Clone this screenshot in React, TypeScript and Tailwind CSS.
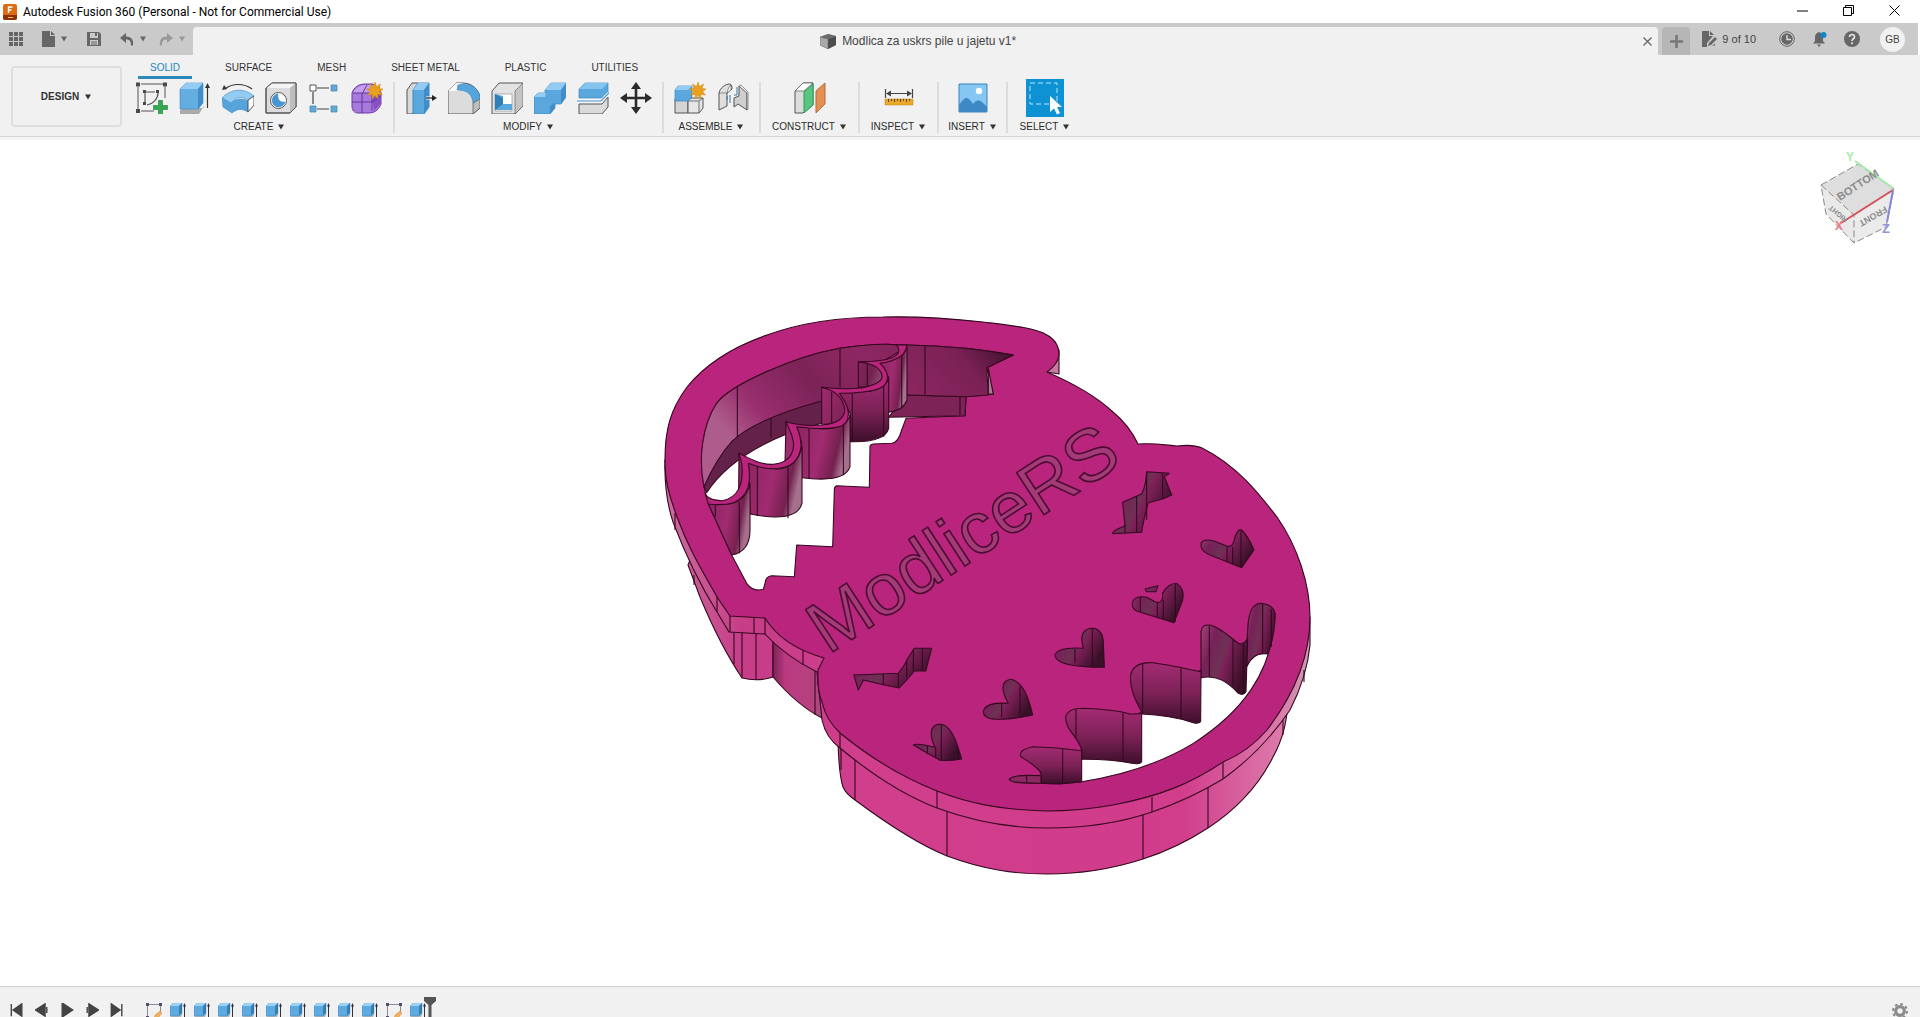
import type { ReactNode } from "react";

const INK = "#35081f";
const OUT = "#555555";

function Caret({ className = "text-[#333]" }: { className?: string }) {
  return (
    <svg viewBox="0 0 8 6" className={`h-1.5 w-2 shrink-0 ${className}`} aria-hidden="true">
      <path d="M1 0.5h6L4 5.5z" fill="currentColor" />
    </svg>
  );
}

function Glyph({ children, box = "0 0 32 32", className = "size-8" }: { children: ReactNode; box?: string; className?: string }) {
  return (
    <svg viewBox={box} className={`block shrink-0 ${className}`} fill="none" aria-hidden="true">
      {children}
    </svg>
  );
}

const Star = () => (
  <path
    d="M24 0l1.500 4.600 4-2.600-1.500 4.500 4.500.500-4 2.500 3 3.500-4.700-.600.200 4.600-3-3.500-3 3.500.200-4.600-4.700.600 3-3.500-4-2.500 4.500-.500-1.500-4.500 4 2.600z"
    fill="#eaa01c"
    stroke="#c98715"
    strokeWidth="0.500"
  />
);

const SketchIcon = () => (
  <Glyph>
    <path d="M5 2H27M2 5V27M5 29H18M29 5V16" stroke="#555" />
    <path d="M0 0.500h4v4H0zM27 .5h4v4h-4zM0 27h4v4H0z" fill="#4a4a4a" />
    <path d="M9 10h10M9 10v11M22 11c0 6-5 11-11 12" stroke="#555" strokeWidth="1.200" />
    <path d="M7 8h3v3H7zM20 8h3v3h-3zM7 20h3v3H7z" fill="#4a4a4a" />
    <path d="M22.500 18.500h4v5h5v4h-5v5h-4v-5h-5v-4h5z" fill="#35a853" stroke="#218a3d" strokeWidth="0.700" />
  </Glyph>
);
const ExtrudeIcon = () => (
  <Glyph>
    <path d="M1 28l4-2h20v-2l-5 8H1z" fill="#aaa" />
    <path d="M1 7l6-6h17v20l-5 6H1z" fill="#64ade0" stroke="#3d8ac2" strokeWidth="0.600" />
    <path d="M1 7l6-6h17l-5 6z" fill="#93cbf2" />
    <path d="M19 7l5-6v20l-5 6z" fill="#3f8dc9" />
    <path d="M28.500 4v22" stroke="#333" strokeWidth="1.200" />
    <path d="M28.500 1l2.500 5h-5z" fill="#333" />
  </Glyph>
);
const RevolveIcon = () => (
  <Glyph>
    <path d="M3 7C10 1 22 1 30 7" stroke="#333" strokeWidth="1.200" />
    <path d="M0 8l2-5 3 4z" fill="#333" />
    <path d="M0 16C9 6 23 6 32 14l-6 4c-6-4-12-4-17 4z" fill="#93cbf2" stroke="#3d8ac2" strokeWidth="0.600" />
    <path d="M0 16l9 5c5-5 12-5 17-2v11c-7-4-11-3-16 1L1 25z" fill="#56a4dc" stroke="#3d8ac2" strokeWidth="0.600" />
    <path d="M26 18l6-4v9l-6 7z" fill="#fff" stroke={OUT} />
  </Glyph>
);
const HoleIcon = () => (
  <Glyph>
    <path d="M1 6l6-5h24v24l-6 6H1z" fill="#dcdcdc" stroke={OUT} />
    <path d="M1 6l6-5h24l-6 5z" fill="#f4f4f4" />
    <path d="M25 6l6-5v24l-6 6z" fill="#bdbdbd" />
    <path d="M1 6l6-5h24v24l-6 6H1z" stroke={OUT} />
    <circle cx="13.500" cy="18.500" r="8" fill="#fff" stroke={OUT} />
    <path d="M13 12a6.500 6.500 0 1 0 7 8c-5 1-8-3-7-8z" fill="#4697d1" stroke="#2c76ad" strokeWidth="0.500" />
  </Glyph>
);
const PatternIcon = () => (
  <Glyph>
    <path d="M9 6h12M5 10v12M9 27h12" stroke="#444" strokeWidth="1.200" />
    <path d="M2 3h6v6H2z" fill="#fff" stroke={OUT} />
    <path d="M23 3h6v6h-6zM23 24h6v6h-6zM2 24h6v6H2z" fill="#64a9d6" stroke="#3f81ac" strokeWidth="0.700" />
  </Glyph>
);
const FormIcon = () => (
  <Glyph>
    <path d="M1 11C3 5 8 2 14 2h8l8 8v12c-3 7-7 9-13 9H7c-4 0-6-3-6-7z" fill="#a879dc" stroke="#6d3aa8" />
    <path d="M2 11c3-6 8-8 13-8h9l-5 8z" fill="#c5a0ee" />
    <path d="M21 12l9-4v13l-7 8z" fill="#8650c4" />
    <path d="M1 20h20l9-6M11 31V12l5-9M21 12v17M2 11h18l9-6" stroke="#5c2f91" strokeWidth="0.900" />
    <Star />
  </Glyph>
);
const PressPullIcon = () => (
  <Glyph>
    <path d="M2 8l5-7h6v24l-6 7H2z" fill="#d8d8d8" stroke={OUT} />
    <path d="M8 8l5-7h11v24l-5 7H8z" fill="#5aa7dd" stroke="#3d8ac2" />
    <path d="M8 8l5-7h11l-5 7z" fill="#93cbf2" />
    <path d="M19 8l5-7v24l-5 7z" fill="#3f8dc9" />
    <path d="M21 16h7" stroke="#fff" strokeWidth="3" />
    <path d="M21 16h8" stroke="#222" strokeWidth="1.300" />
    <path d="M32 16l-5-3v6z" fill="#222" />
  </Glyph>
);
const FilletIcon = () => (
  <Glyph>
    <path d="M0 9l8-8h7c10 0 17 8 17 16v9l-7 6H0z" fill="#dcdcdc" stroke={OUT} />
    <path d="M0 9l8-8h7l-4 8z" fill="#fafafa" />
    <path d="M10 3c3-2 20-3 22 13l-7 5C24 11 18 8 9 8z" fill="#56a4dc" stroke="#3d8ac2" strokeWidth="0.600" />
    <path d="M25 21l7-4v9l-7 6z" fill="#bdbdbd" stroke={OUT} strokeWidth="0.700" />
  </Glyph>
);
const ShellIcon = () => (
  <Glyph>
    <path d="M1 9l7-8h24v23l-8 8H1z" fill="#e2e2e2" stroke={OUT} />
    <path d="M24 9l8-8v23l-8 8z" fill="#c4c4c4" stroke={OUT} strokeWidth="0.600" />
    <path d="M4 12h17v17H4z" fill="#fff" stroke="#888" strokeWidth="0.600" />
    <path d="M4 12l8 2v8h9v6H4z" fill="#5aa7dd" />
    <path d="M4 12l8 4v6l-8 6z" fill="#2d7fba" />
  </Glyph>
);
const CombineIcon = () => (
  <Glyph>
    <path d="M0 15l4-4h7V8l6-7h15v14l-5 7h-6v4l-5 6H0z" fill="#5aa7dd" stroke="#3d8ac2" strokeWidth="0.700" />
    <path d="M11 8l6-7h15l-5 7zM0 15l4-4h8l-1 4z" fill="#93cbf2" />
    <path d="M27 8l5-7v14l-5 7z" fill="#3f8dc9" />
    <path d="M16 24l5-3v5l-5 6z" fill="#3f8dc9" />
  </Glyph>
);
const SplitIcon = () => (
  <Glyph>
    <path d="M2 7l6-6h23v10l-6 5H2z" fill="#5aa7dd" stroke="#3d8ac2" strokeWidth="0.700" />
    <path d="M2 7l6-6h23l-6 6z" fill="#86c4f0" />
    <path d="M2 22h23l6-7v10l-6 7H2z" fill="#dadada" stroke={OUT} />
    <path d="M0 19h24l8-8" stroke="#fff" strokeWidth="3" />
    <path d="M0 19h24l8-8" stroke="#3d8ac2" strokeWidth="1.200" />
  </Glyph>
);
const MoveIcon = () => (
  <Glyph>
    <path d="M16 5v22M5 16h22" stroke="#2b2b2b" strokeWidth="2.600" />
    <path d="M16 0l5 7H11zM16 32l5-7H11zM0 16l7-5v10zM32 16l-7-5v10z" fill="#2b2b2b" />
  </Glyph>
);
const ComponentIcon = () => (
  <Glyph>
    <path d="M1 17h13v14H1z" fill="#d4d4d4" stroke={OUT} />
    <path d="M14 18l4-2h11v10l-4 5H14z" fill="#e6e6e6" stroke={OUT} />
    <path d="M14 19h11v12M25 19l4-3" stroke={OUT} strokeWidth="0.800" />
    <path d="M1 8l3-4h14v11l-4 4H1z" fill="#5aa7dd" stroke="#3d8ac2" strokeWidth="0.700" />
    <path d="M1 8l3-4h14l-4 4z" fill="#93cbf2" />
    <Star />
  </Glyph>
);
const JointIcon = () => (
  <Glyph>
    <path d="M2 28V11C3 6 8 2 13 2c2 1 2 3 2 5l-5 4v13z" fill="#dedede" stroke={OUT} />
    <path d="M10 11c1-4 2-7 4-8v5zM2 11l8 0" fill="#f7f7f7" stroke={OUT} strokeWidth="0.600" />
    <path d="M17 16l5-2V4l8 7v17l-9-6-4 3z" fill="#cfcfcf" stroke={OUT} />
    <path d="M22 4l2-1 7 7v17l-1 1V11z" fill="#f3f3f3" stroke={OUT} strokeWidth="0.600" />
    <path d="M10 14v4M13 13v8M17 13h3V5" stroke="#3c7ba6" />
  </Glyph>
);
const ConstructIcon = () => (
  <Glyph>
    <path d="M1 9l8-8h10v22L9 31H1z" fill="#dcdcdc" stroke={OUT} />
    <path d="M1 9l8-8h10l-9 8z" fill="#fff" stroke={OUT} strokeWidth="0.700" />
    <path d="M10 10l9-8v21l-9 8z" fill="#58c580" stroke="#2d9c55" />
    <path d="M22 9l9-8v21l-9 9z" fill="#e39055" stroke="#b5683a" />
  </Glyph>
);
const InspectIcon = () => (
  <Glyph>
    <path d="M2.500 7v9M29.500 7v9M5 11.500h22" stroke="#444" strokeWidth="1.200" />
    <path d="M3 11.500l5-3v6zM29 11.500l-5-3v6z" fill="#444" />
    <path d="M2 17h28v6H2z" fill="#eba926" stroke="#bd8218" strokeWidth="0.500" />
    <path d="M5.500 17v3M8.500 17v2M11.500 17v3M14.500 17v2M17.500 17v3M20.500 17v2M23.500 17v3M26.500 17v2" stroke="#5b420f" />
  </Glyph>
);
const InsertIcon = () => (
  <Glyph>
    <path d="M2 2h28v28H2z" fill="#86c6f3" stroke="#3a83b8" />
    <path d="M2 23c6-8 8-10 14-1 4-5 7-5 14 3v5H2z" fill="#3e89c4" />
    <circle cx="22" cy="9" r="3.200" fill="#fff" />
  </Glyph>
);
const SelectIcon = () => (
  <Glyph box="0 0 38 38" className="size-[38px]">
    <path d="M0 0h38v38H0z" fill="#0e92d4" />
    <path d="M4 4h27v21H4z" stroke="#bfe6fa" strokeDasharray="5 3" />
    <path d="M24 17v16l4-3.500 3 6 3-1.500-3-6h5z" fill="#fff" />
  </Glyph>
);

const TABS = ["SURFACE", "MESH", "SHEET METAL", "PLASTIC", "UTILITIES"];

function Group({ label, names, icons, className }: { label: string; names: string[]; icons: ReactNode[]; className: string }) {
  return (
    <div className={`flex h-[51px] flex-col items-center justify-between ${className}`}>
      <div className="flex h-8 items-center gap-[11px]">
        {icons.map((icon, i) => (
          <button key={names[i]} type="button" aria-label={names[i]}>
            {icon}
          </button>
        ))}
      </div>
      <button type="button" className="flex items-center gap-1 text-[10px] leading-3 whitespace-nowrap text-[#2b2b2b]">
        {label}
        <Caret />
      </button>
    </div>
  );
}

function ViewCube() {
  return (
    <svg viewBox="1810 145 100 105" className="absolute top-[5px] right-2.5 h-[105px] w-[100px]" fill="none" role="img" aria-label="View cube">
      <path d="M1821 185l37-21 36 25-40 26z" fill="#dedede" />
      <path d="M1821 185l33 30v28l-28-29z" fill="#e9e9e9" />
      <path d="M1854 215l40-26-8 38-32 16z" fill="#ebebeb" />
      <path d="M1821 185l37-21 36 25-8 38-32 16-28-29zM1821 185l33 30v28" stroke="#8a8a8a" strokeDasharray="7 3" />
      <path d="M1855 161l38 27" stroke="#a6eca9" strokeWidth="2" />
      <path d="M1893 190l-52 33" stroke="#d4525a" strokeWidth="2" />
      <path d="M1893 190l-6 32" stroke="#8787d8" strokeWidth="2" />
      <g fontFamily="Liberation Sans, sans-serif" fontWeight="bold" fill="#8b8b8b">
        <text x="1840" y="201" fontSize="11" transform="rotate(-33 1840 201)">BOTTOM</text>
        <text x="1885" y="206" fontSize="9" transform="rotate(150 1885 206)">FRONT</text>
        <text x="1848" y="219" fontSize="7" transform="rotate(220 1848 219)">RIGHT</text>
        <text x="1846" y="161" fontSize="12" fill="#a6eca9">Y</text>
        <text x="1835" y="230" fontSize="12" fill="#ee7c82">X</text>
        <text x="1882" y="233" fontSize="13" fill="#9494dd">Z</text>
      </g>
    </svg>
  );
}

function Model() {
  return (
    <svg viewBox="0 140 1920 846" className="absolute inset-0 size-full" fill="none" role="img" aria-label="Cookie cutter model">
      <defs>
        <linearGradient id="wallX" x1="0" x2="1" y1="0" y2="0.300">
          <stop offset="0" stopColor="#8a2460" />
          <stop offset="0.550" stopColor="#a12b71" />
          <stop offset="0.850" stopColor="#74214f" />
          <stop offset="1" stopColor="#a5708d" />
        </linearGradient>
        <linearGradient id="wallY" x1="0" x2="0" y1="0" y2="1">
          <stop offset="0" stopColor="#a32b73" />
          <stop offset="0.500" stopColor="#7e2258" />
          <stop offset="1" stopColor="#3d0f2b" />
        </linearGradient>
        <linearGradient id="back" x1="0" x2="1" y1="0.400" y2="0">
          <stop offset="0" stopColor="#ad5c8b" />
          <stop offset="0.140" stopColor="#982e6e" />
          <stop offset="0.350" stopColor="#7c2358" />
          <stop offset="0.550" stopColor="#8e2763" />
          <stop offset="0.820" stopColor="#7b2156" />
          <stop offset="1" stopColor="#3b1029" />
        </linearGradient>
        <linearGradient id="rim" gradientUnits="userSpaceOnUse" x1="665" x2="1310" y1="0" y2="0">
          <stop offset="0" stopColor="#ca6d9c" />
          <stop offset="0.120" stopColor="#c63d88" />
          <stop offset="0.300" stopColor="#d03e8c" />
          <stop offset="0.800" stopColor="#d13c8b" />
          <stop offset="0.950" stopColor="#dc78aa" />
          <stop offset="1" stopColor="#c99caf" />
        </linearGradient>
        <linearGradient id="hole" x1="0" x2="1" y1="0" y2="0.500">
          <stop offset="0" stopColor="#a04377" />
          <stop offset="0.300" stopColor="#78205a" />
          <stop offset="0.550" stopColor="#6d3253" />
          <stop offset="0.620" stopColor="#7e2159" />
          <stop offset="1" stopColor="#3a1029" />
        </linearGradient>
        <linearGradient id="neck" x1="0" x2="1" y1="0" y2="0">
          <stop offset="0" stopColor="#7d2358" />
          <stop offset="0.250" stopColor="#bb3a80" />
          <stop offset="0.900" stopColor="#b44381" />
          <stop offset="1" stopColor="#8e6077" />
        </linearGradient>
      </defs>

      <g stroke={INK} strokeWidth="1.100" strokeLinejoin="round">
        <path d="M688 565L700 597Q720 645 742 678Q758 682 773 677V635L729 615L690 560Z" fill="url(#rim)" />
        <path d="M773 640V677Q798 706 822 718V665Z" fill="url(#neck)" />
        <path d="M694 575v10M734 633V664M742 633V678M756 633V680M815 671V715M818 660Q816 680 822 707V718" />
        <path d="M838 742Q839 775 843 787Q846 794 855 800C890 826 920 845 947 856C985 870 1015 874 1047 874C1085 874 1115 868 1143 859C1168 851 1188 841 1208 828C1240 807 1260 783 1273 757Q1287 732 1288 700Z" fill="url(#rim)" />
        <path d="M855 755V800M947 800V856M1143 800V859M1208 780V828M1283 715V735M841 748V770" />
        <path d="M665 460Q664 495 673 522Q692 572 717 612L729 632L765 634Q785 656 817 672L822 720Q826 738 840 748C870 773 903 795 937 808C975 822 1012 828 1047 828C1085 828 1120 823 1152 812Q1190 799 1223 779Q1263 750 1290 710Q1307 677 1310 645V617L822 600L700 500Z" fill="url(#rim)" />
        <path d="M1059 350V374L1047 372Z" fill="#c8799f" />
        <path
          d="M665 460C665 430 670 410 687 387C708 361 738 345 767 335C800 323 842 317 883 317C925 316 965 320 983 322C1015 326 1035 328 1047 335C1058 341 1059 349 1059 355Q1058 364 1047 372C1070 382 1097 397 1113 412Q1129 425 1138 444C1155 443 1165 445 1177 446Q1193 444 1202 448C1238 466 1260 495 1277 517C1298 547 1310 585 1310 617C1310 655 1296 692 1267 730C1255 744 1240 755 1223 762C1190 784 1160 796 1113 805Q1080 811 1047 811C1000 810 968 803 937 791C899 776 868 756 840 733Q826 720 822 702Q817 690 818 670L824 658Q782 646 765 618L730 616L717 597C700 567 688 547 677 517C668 492 665 480 665 460Z"
          fill="#b9247c"
        />
        <path d="M675 513V530M717 597V612M730 616V632M754 617V633M765 618V634M803 650V665M840 733V748M937 791V808M1152 797V812M1223 762V779M1304 670V682" />
      </g>

      <g transform="translate(650 300) scale(.333333)" stroke={INK} strokeWidth="3.200" strokeLinejoin="round">
        <path d="M165 575C145 480 155 380 200 310C240 255 430 170 570 145C640 133 720 130 740 135L770 135Q940 138 1090 165L1010 203L1030 283L948 290L945 347L768 355L755 390Q745 428 725 430L670 432Q658 434 660 445L658 562Q620 560 560 557Q552 560 553 570L548 740L440 735L433 830L365 827Q347 828 345 850L340 868Q310 877 290 850L245 765L175 612Z" fill="#fff" />
        <path d="M162 560Q220 360 515 303L545 360L410 402Q240 470 170 578Z" fill="#64224a" />
        <path d="M770 285L948 290L945 347L715 352Z" fill="#7d2358" />
        <path d="M930 292V345M363 350V412" />
        <path d="M162 560C145 480 155 380 200 310C240 255 430 170 570 145C640 133 720 130 740 135L770 135Q940 138 1090 165L1010 203L1015 285L948 290L770 285L715 290L515 303C380 340 290 380 245 425Q200 475 162 560Z" fill="url(#back)" />
        <path d="M1015 205L1030 283L1015 281Z" fill="#aa7b93" />
        <path d="M262 262V412M570 145V262M825 137V284M770 135V285" />
        <path d="M267 460L266 575Q290 540 282 490ZM408 365L405 487Q448 460 432 405ZM515 262V372Q600 380 595 330Q585 275 515 262ZM625 185V262Q710 260 708 225Q690 190 625 185Z" fill="url(#wallX)" />
        <path d="M652 190V262M545 275V375" />
        <path d="M688 190L771 140V300Q760 332 715 337L712 240Z" fill="url(#wallX)" />
        <path d="M568 280L660 274Q712 262 716 230V385Q705 428 600 425V340Z" fill="url(#wallY)" />
        <path d="M440 380L520 387Q590 385 600 345V500Q585 550 455 533V430Z" fill="url(#wallX)" />
        <path d="M295 490L380 508Q440 505 456 440V610Q440 670 300 642Z" fill="url(#wallX)" />
        <path d="M175 612L240 612Q290 600 300 550V690Q300 755 245 765Z" fill="url(#wallX)" />
        <path d="M196 614V650M268 606V760M322 495V648M414 500V655M477 386V535M580 375V525M607 280V425M701 255V410M755 160V322" />
        <path d="M165 578Q170 600 215 602C265 595 282 550 275 490L267 460C300 475 330 495 370 493C425 487 440 450 425 405L408 365Q460 380 515 375C580 370 592 340 580 312Q568 275 515 262Q580 270 640 263C695 250 705 235 690 212Q675 190 625 185Q680 187 725 174Q758 160 740 135L770 135Q770 178 690 190C722 220 718 250 690 265Q650 280 568 280C600 320 605 360 575 378Q535 392 440 380C462 430 455 475 420 495Q370 520 295 490C305 550 295 590 250 608Q220 617 175 612Z" fill="#b9247c" />
      </g>

      <g transform="translate(980 580) scale(.333333)" stroke={INK} strokeWidth="3.200" strokeLinejoin="round">
        <path d="M88 597Q90 608 120 608L240 612L305 605Q500 575 640 490C780 400 880 280 885 100L800 190L663 270L485 395L305 510L183 585Z" fill="#fff" />
        <path d="M800 250C803 150 797 75 840 70Q880 73 885 100Q887 160 862 222Q820 215 800 260Z" fill="url(#hole)" />
        <path d="M663 295V155Q664 133 690 135C730 145 755 180 780 192Q795 192 803 175L798 335Q790 348 775 340C740 303 710 285 663 293Z" fill="url(#hole)" />
        <path d="M485 395Q447 330 452 285Q460 245 520 248Q570 255 663 275L662 425Q655 432 640 428Q570 405 485 402Z" fill="url(#wallY)" />
        <path d="M305 510C295 470 255 450 257 410Q264 385 310 385Q400 388 450 402Q475 403 485 400V545Q480 554 455 550Q390 537 305 538Z" fill="url(#wallY)" />
        <path d="M183 580Q175 562 122 530Q115 508 160 500Q230 502 305 512V605Q240 614 183 610Z" fill="url(#wallY)" />
        <path d="M183 587Q100 583 88 597Q95 610 183 610Z" fill="#8c2862" />
        <path d="M848 72V222M874 88V200M688 137V290M759 176V320M790 192V342M488 250V400M603 265V415M288 388V475M429 399V546M248 507V610M140 587V608" />
        <g fill="url(#hole)">
          <path d="M225 225Q235 200 310 205C300 170 305 145 340 145Q370 150 370 190L373 262Q225 262 225 225Z" />
          <path d="M10 395Q15 365 85 370C60 325 65 300 95 298C130 310 145 350 158 405Q10 435 10 395Z" />
        </g>
        <path d="M285 207V250M337 146V258M65 370V412M120 320V405" />
      </g>

      <g transform="translate(1000 340) scale(.333333)" stroke={INK} strokeWidth="3.200" strokeLinejoin="round" fill="url(#hole)">
        <path d="M440 395L508 400L493 410L515 465L490 476L445 488Q430 540 425 577L338 581Q335 572 375 558L368 487L425 462Q437 440 440 395Z" />
        <path d="M440 395V540M410 468V578M488 400V474M375 555V578" />
        <path d="M603 610Q610 595 640 602L680 618Q700 625 705 590Q715 565 725 570Q745 590 762 630L725 683L625 643Q600 630 603 610Z" />
        <path d="M681 618V665M698 622V672M723 570V682" />
        <path d="M397 790Q402 765 440 772L465 785Q490 795 488 760Q505 730 530 730Q555 745 548 780L522 848L410 813Q395 805 397 790Z" />
        <path d="M421 770V815M472 788V832M490 780V838M526 732V846M435 747L474 737L468 755L440 755Z" />
      </g>

      <g transform="translate(650 560) scale(.333333)" stroke={INK} strokeWidth="3.200" strokeLinejoin="round" fill="url(#hole)">
        <path d="M611 344L635 344L745 340Q768 310 770 300L793 265H845L827 333H793Q780 350 747 384L690 372L640 360L625 390Z" />
        <path d="M700 342V373M745 340V384M770 300V350M790 268V333M817 265V333" />
        <path d="M790 555Q800 548 855 562C840 530 835 495 870 492Q900 495 920 550L935 597Q900 603 870 601Z" />
        <path d="M832 558V583M857 562V594M874 493V600M925 565V597" />
      </g>

      <text
        x="828"
        y="655"
        transform="rotate(-33 828 655)"
        fontFamily="Liberation Sans, sans-serif"
        fontSize="73"
        fill="#a43a77"
        stroke="#4a0c31"
        strokeWidth="1.600"
      >
        ModliceRS
      </text>
    </svg>
  );
}

const MiniExtrude = () => (
  <Glyph box="0 0 16 16" className="size-4">
    <path d="M0 14l3-2h7l3-1-3 5H0z" fill="#bbb" />
    <path d="M0 3l3-3h9v10l-3 3H0z" fill="#5ea9dd" stroke="#3f86b8" strokeWidth="0.500" />
    <path d="M0 3l3-3h9L9 3z" fill="#9dd0f2" />
    <path d="M9 3l3-3v10l-3 3z" fill="#357fb5" />
    <path d="M14.500 3v11" stroke="#333" />
    <path d="M14.500 0l1.500 3.500h-3z" fill="#333" />
  </Glyph>
);
const MiniSketch = () => (
  <Glyph box="0 0 16 16" className="size-4">
    <path d="M2 1.500h12M1.500 2v12M2 14.500h8M14.500 2v7" stroke="#8c8c98" />
    <path d="M0 0h3v3H0zM13 0h3v3h-3zM0 13h3v3H0z" fill="#50506c" />
    <path d="M8 16l1-4 5-4 2 2-4 5z" fill="#edb45c" stroke="#b8792f" strokeWidth="0.400" />
  </Glyph>
);

const TIMELINE = ["s", "e", "e", "e", "e", "e", "e", "e", "e", "e", "s", "e"];
const PLAYBACK = [
  { name: "Go to start", d: "M1 1v14M13 1v14L3 8z" },
  { name: "Step back", d: "M11 1v14L0 8zM13 4.500v7" },
  { name: "Play", d: "M2 0v16L14 8z" },
  { name: "Step forward", d: "M4 1v14L15 8zM2 4.500v7" },
  { name: "Go to end", d: "M1 1v14L11 8zM13 1v14" },
];

export default function App() {
  return (
    <div className="flex h-screen flex-col overflow-hidden bg-white font-['Liberation_Sans',sans-serif] text-[#333]">
      <header className="flex h-[23px] shrink-0 items-center pl-[3px] text-xs text-black">
        <Glyph box="0 0 14 16" className="h-4 w-3.5">
          <rect width="14" height="16" rx="2" fill="#e06a12" />
          <path d="M0 11h14v3a2 2 0 0 1-2 2H2a2 2 0 0 1-2-2z" fill="#8b3206" />
          <path d="M5.500 9V3h4M5.500 6h3" stroke="#fff" strokeWidth="1.400" />
          <path d="M5 13.500h5" stroke="#f6b37b" />
        </Glyph>
        <h1 className="ml-1.5 flex-1 font-['Roboto',sans-serif] leading-4">Autodesk Fusion 360 (Personal - Not for Commercial Use)</h1>
        <div className="mr-5 flex items-center gap-[35px] pb-[3px]">
          <button type="button" aria-label="Minimize"><Glyph box="0 0 11 11" className="size-[11px]"><path d="M0 6h11" stroke="#000" /></Glyph></button>
          <button type="button" aria-label="Restore"><Glyph box="0 0 11 11" className="size-[11px]"><path d="M.5 2.500h8v8h-8zM2.500 2.500v-2h8v8h-2" stroke="#000" /></Glyph></button>
          <button type="button" aria-label="Close"><Glyph box="0 0 11 11" className="size-[11px]"><path d="M.5.5l10 10M10.500.5l-10 10" stroke="#000" /></Glyph></button>
        </div>
      </header>

      <div className="mr-0.5 flex h-8 shrink-0 bg-[#cacaca] pt-1 text-[#666]">
        <div className="flex w-[193px] shrink-0 items-center pb-1 pl-[9px]">
          <button type="button" aria-label="Data panel"><Glyph box="0 0 14 14" className="size-3.5"><path d="M0 0h4v4H0zM5 0h4v4H5zM10 0h4v4h-4zM0 5h4v4H0zM5 5h4v4H5zM10 5h4v4h-4zM0 10h4v4H0zM5 10h4v4H5zM10 10h4v4h-4z" fill="#666" /></Glyph></button>
          <button type="button" aria-label="File" className="ml-[19px] flex items-center gap-[5px]">
            <Glyph box="0 0 13 16" className="h-4 w-[13px]"><path d="M0 0h8v5h5v11H0zM9 0l4 4H9z" fill="#666" /></Glyph>
            <Caret className="text-[#666]" />
          </button>
          <button type="button" aria-label="Save" className="ml-[19px]"><Glyph box="0 0 14 14" className="size-3.5"><path fillRule="evenodd" d="M0 0h12l2 2v12H0zM3 1v5h8V1zM3 8v5h8V8z" fill="#666" /><path d="M8 1h2v3H8zM4 9.500h6v1H4zM4 11.500h6v1H4z" fill="#666" /></Glyph></button>
          <button type="button" aria-label="Undo" className="ml-[19px] flex items-center gap-[5px]">
            <Glyph box="0 0 14 13" className="h-[13px] w-3.5"><path d="M0 5l6-5v3.500c5 0 8 3 7 9h-2c0-4-1-6-5-6V10z" fill="#666" /></Glyph>
            <Caret className="text-[#666]" />
          </button>
          <button type="button" aria-label="Redo" className="ml-3 flex items-center gap-[5px]">
            <Glyph box="0 0 14 13" className="h-[13px] w-3.5"><path d="M14 5L8 0v3.500c-5 0-8 3-7 9h2c0-4 1-6 5-6V10z" fill="#9a9a9a" /></Glyph>
            <Caret className="text-[#9a9a9a]" />
          </button>
        </div>
        <div className="flex min-w-0 flex-1 items-center rounded-t bg-[#f1f1f1] pr-1.5">
          <div className="flex flex-1 items-center justify-center gap-1.5 text-xs text-[#444]">
            <Glyph box="0 0 16 16" className="size-4">
              <path d="M0 4l8-3 8 2v9l-8 4-8-4z" fill="#8e8e8e" />
              <path d="M0 4l8 2v10l-8-4z" fill="#a9a9a9" stroke="#777" strokeWidth="0.600" />
              <path d="M8 6l8-3v9l-8 4z" fill="#4d4d4d" />
              <path d="M0 4l8-3 8 2-8 3z" fill="#6c6c6c" />
            </Glyph>
            Modlica za uskrs pile u jajetu v1*
          </div>
          <button type="button" aria-label="Close document"><Glyph box="0 0 9 9" className="size-[9px]"><path d="M.5.5l8 8M8.500.5l-8 8" stroke="#666" strokeWidth="1.300" /></Glyph></button>
        </div>
        <div className="flex shrink-0 items-center pl-1">
          <button type="button" aria-label="New document" className="flex h-7 w-7 items-center justify-center rounded-t bg-[#b6b6b6]"><Glyph box="0 0 13 13" className="size-[13px]"><path d="M6.500 0v13M0 6.500h13" stroke="#777" strokeWidth="2.600" /></Glyph></button>
          <div className="flex items-center pb-1 pl-3">
            <button type="button" className="flex items-center gap-1 text-[11px] leading-4 text-[#444]">
              <Glyph box="0 0 16 16" className="size-4"><path d="M0 0h7v5h4L5 12v4H0zM8 0l4 4H8z" fill="#666" /><path d="M6 15l1-3 6-6 2 2-6 6z" fill="#666" /><path d="M10 15h3v-3" fill="#888" /></Glyph>
              <span>9 of 10</span>
            </button>
            <button type="button" aria-label="Job status" className="ml-[23px]"><Glyph box="0 0 16 16" className="size-4"><circle cx="8" cy="8" r="7.300" stroke="#666" /><circle cx="8" cy="8" r="5.700" fill="#666" /><path d="M8 4v4.500h4" stroke="#ddd" strokeWidth="1.400" /></Glyph></button>
            <button type="button" aria-label="Notifications" className="ml-[17px]"><Glyph box="0 0 16 16" className="size-4"><path d="M1 12.500l2-2.500V6c0-3 2-4 4-5 2 1 4 2 4 5v4l2 2.500zM5 13.500h4L7 16z" fill="#666" /><circle cx="11.500" cy="4" r="3" fill="#1485c4" /></Glyph></button>
            <button type="button" aria-label="Help" className="ml-4"><Glyph box="0 0 16 16" className="size-4"><circle cx="8" cy="8" r="8" fill="#666" /><path d="M5.500 6c0-3.500 5.200-3.200 5 0 0 1.800-2.500 1.800-2.500 4M8 11.200v2" stroke="#e4e4e4" strokeWidth="1.700" /></Glyph></button>
            <button type="button" aria-label="Account" className="mr-[13px] ml-5 flex size-[25px] items-center justify-center rounded-full bg-[#f1f1f1] text-[10px] text-[#444]">GB</button>
          </div>
        </div>
      </div>

      <div className="flex h-[85px] shrink-0 border-b-[3px] border-[#f4f4f4] bg-[#f1f1f1] shadow-[inset_0_-1px_0_#d6d6d6]">
        <button type="button" className="mt-[11px] ml-[11px] flex h-[61px] w-[111px] shrink-0 items-center justify-center gap-[5px] rounded border-2 border-[#dedede] text-[10px] font-bold">
          DESIGN
          <Caret />
        </button>
        <div className="ml-2 flex flex-col">
          <nav className="flex h-6 gap-[21px] pl-2 text-[10px]">
            <button type="button" className="border-b-[3px] border-[#2b8ab8] px-3 pt-1 text-[#1b86b8]">SOLID</button>
            {TABS.map((t) => (
              <button key={t} type="button" className="border-b-[3px] border-transparent px-3 pt-1 whitespace-nowrap">{t}</button>
            ))}
          </nav>
          <div className="mt-[3px] flex divide-x-2 divide-[#dcdcdc]">
            <Group className="pr-2.5 pl-1.5" label="CREATE" names={["Create sketch", "Extrude", "Revolve", "Hole", "Pattern", "Create form"]} icons={[<SketchIcon />, <ExtrudeIcon />, <RevolveIcon />, <HoleIcon />, <PatternIcon />, <FormIcon />]} />
            <Group className="px-2.5" label="MODIFY" names={["Press pull", "Fillet", "Shell", "Combine", "Split", "Move"]} icons={[<PressPullIcon />, <FilletIcon />, <ShellIcon />, <CombineIcon />, <SplitIcon />, <MoveIcon />]} />
            <Group className="px-2.5" label="ASSEMBLE" names={["New component", "Joint"]} icons={[<ComponentIcon />, <JointIcon />]} />
            <Group className="w-[99px]" label="CONSTRUCT" names={["Offset plane"]} icons={[<ConstructIcon />]} />
            <Group className="w-[79px]" label="INSPECT" names={["Measure"]} icons={[<InspectIcon />]} />
            <Group className="w-[69px]" label="INSERT" names={["Insert image"]} icons={[<InsertIcon />]} />
            <Group className="w-[74px]" label="SELECT" names={["Select"]} icons={[<SelectIcon />]} />
          </div>
        </div>
      </div>

      <main className="relative min-h-0 flex-1">
        <Model />
        <ViewCube />
      </main>

      <footer className="flex h-[31px] shrink-0 items-start border-t border-[#cfcfcf] bg-[#f1f1f1] pt-4">
        <div className="flex shrink-0 gap-[11px] pl-2.5">
          {PLAYBACK.map((p) => (
            <button key={p.name} type="button" aria-label={p.name}>
              <Glyph box="0 0 15 16" className="h-3.5 w-3.5"><path d={p.d} fill="#444" stroke="#444" strokeWidth="1.600" /></Glyph>
            </button>
          ))}
        </div>
        <div className="ml-[22px] flex gap-2">
          {TIMELINE.map((k, i) => (
            <button key={i} type="button" aria-label={k === "s" ? `Sketch ${i + 1}` : `Extrude ${i + 1}`}>
              {k === "s" ? <MiniSketch /> : <MiniExtrude />}
            </button>
          ))}
        </div>
        <Glyph box="0 0 12 22" className="-mt-1.5 -ml-0.5 h-[22px] w-3"><path d="M0 0h12v4L7.500 8v14h-3V8L0 4z" fill="#555" /></Glyph>
        <div className="flex-1" />
        <button type="button" aria-label="Settings" className="mr-3">
          <Glyph box="0 0 16 16" className="size-4"><circle cx="8" cy="8" r="4.300" stroke="#8a8a8a" strokeWidth="3.200" /><circle cx="8" cy="8" r="7" stroke="#8a8a8a" strokeWidth="2" strokeDasharray="2.750 2.750" /></Glyph>
        </button>
      </footer>
    </div>
  );
}
